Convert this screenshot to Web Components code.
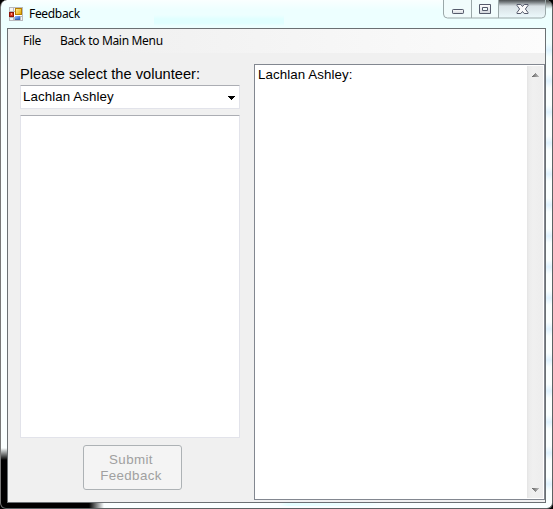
<!DOCTYPE html>
<html lang="en"><head><meta charset="utf-8"><title>Feedback</title>
<style>html,body{margin:0;width:553px;height:509px;overflow:hidden;background:#000}</style></head>
<body>
<feedback-window></feedback-window>
<script>
const define=(name,html)=>{
  const t=document.createElement('template');t.innerHTML=html;
  customElements.define(name,class extends HTMLElement{
    constructor(){super();this.attachShadow({mode:'open'}).append(t.content.cloneNode(true));}
  });
};
define('app-icon',`<style>:host{display:block;width:14px;height:14px}svg{display:block}</style>
<svg width="14" height="14" viewBox="0 0 14 14" shape-rendering="crispEdges">
<defs><linearGradient id="y" x2="1" y2="1"><stop stop-color="#ffeb91"/><stop offset="1" stop-color="#e6a600"/></linearGradient><linearGradient id="b" x2="1" y2="1"><stop stop-color="#98bdff"/><stop offset="1" stop-color="#2860c8"/></linearGradient></defs>
<path fill="#b9b9bd" d="M0 0h14v14H0z"/><path fill="#f4f4f4" d="M1 1h3v3H1zM5 1h1v3H5zM1 11h3v2H1zM12 10h1v3h-1z"/>
<path fill="#8d1409" d="M0 5h5v5H0z"/><path fill="#d83b22" d="M1 6h3v3H1z"/><path fill="#ff9a83" d="M2 6h1v2H2z"/>
<path fill="#fff" d="M5 5h1v5H5z"/><path fill="#b68000" d="M6 1h7v7H6z"/><path fill="url(#y)" d="M7 2h5v5H7z"/>
<path fill="#fff" d="M5 8h8v1H5z"/><path fill="#3864ad" d="M6 9h5v4H6z"/><path fill="url(#b)" d="M6 9h5v3H6z"/></svg>`);
define('caption-buttons',`<style>:host{display:block;width:103px;height:19px}svg{display:block}</style>
<svg width="103" height="19" viewBox="0 0 103 19">
<defs><linearGradient id="g" x2="0" y2="1"><stop stop-color="#fff"/><stop offset="1" stop-color="#d2d6dc"/></linearGradient>
<linearGradient id="c" x2="0" y2="1"><stop stop-color="#4d5052"/><stop offset=".12" stop-color="#777d80"/><stop offset=".34" stop-color="#d8e0e4"/><stop offset="1" stop-color="#edfafd"/></linearGradient></defs>
<path d="M.5 0v14q0 4 4 4H55V0z" fill="#f1fcfc"/><path d="M55 0v18h43q4 0 4-4V0z" fill="url(#c)"/>
<path d="M.5 0v14q0 4 4 4h94q4 0 4-4V0M28.500 0v18M55.500 0v18" fill="none" stroke="#9ba8a9"/>
<g stroke="#555a6b" fill="url(#g)"><rect x="9.500" y="9.500" width="11" height="4" rx=".7"/>
<path fill-rule="evenodd" d="M36.500 4.500h11v9h-11zM39.500 7.500h5v3h-5z"/>
<path stroke-linejoin="round" fill="#fafafa" d="M74 4.500h3.800l1.700 2 1.700-2H85v1l-2.600 3.500L85 12.500v1h-3.800l-1.700-2-1.700 2H74v-1L76.600 9 74 5.500z"/></g></svg>`);
define('title-bar',`<style>:host{display:flex;height:28px;box-sizing:border-box;padding-left:8px}
app-icon{margin-top:7px}.t{margin-left:6px;font:12px/16px "Noto Sans",sans-serif;letter-spacing:-.32px;padding-top:6px;flex:1;color:#000}
caption-buttons{margin-right:6px}</style><app-icon></app-icon><div class="t"><slot></slot></div><caption-buttons></caption-buttons>`);
define('menu-strip',`<style>:host{display:flex;height:24px;gap:19px;padding-left:15px;box-sizing:border-box;background:linear-gradient(90deg,#f0f0f0,#f0f0f0 20%,#fcfcfc);font:12px/24px "Noto Sans",sans-serif;letter-spacing:-.32px;color:#000}</style><slot></slot>`);
define('combo-box',`<style>:host{display:flex;align-items:center;justify-content:space-between;height:24px;box-sizing:border-box;border:1px solid #e2e3ea;border-top-color:#abadb3;border-radius:1px;background:#fff;padding:0 4px 0 2px;font-size:13.333px;line-height:16px;letter-spacing:.07px}svg{display:block;margin-top:2px}</style>
<span><slot></slot></span><svg width="7" height="4" shape-rendering="crispEdges"><path d="M0 0h7v1H0zM1 1h5v1H1zM2 2h3v1H2zM3 3h1v1H3z"/></svg>`);
define('text-area',`<style>:host{display:block;box-sizing:border-box;height:323px;border:1px solid #e2e3ea;border-top-color:#abadb3;border-radius:1px;background:#fff}</style><slot></slot>`);
define('submit-button',`<style>:host{display:block;box-sizing:border-box;width:99px;height:45px;border:1px solid #adb2b5;border-radius:3px;background:#f4f4f4;color:#a0a0a0;font-size:13.333px;line-height:16px;text-align:center;padding:6px 3px 0 0;letter-spacing:.4px}</style><slot></slot>`);
define('scroll-bar',`<style>:host{display:flex;flex-direction:column;justify-content:space-between;align-items:center;box-sizing:border-box;width:17px;padding:7px 0 6px 1px;background:linear-gradient(90deg,#fff 1px,#e4e4e4 1px,#ececec 3px,#f0f0f0 7px,#ededed)}svg{display:block}</style>
<svg width="8" height="4" shape-rendering="crispEdges"><defs><linearGradient id="s"><stop stop-color="#666"/><stop offset="1" stop-color="#bbb"/></linearGradient></defs><path fill="url(#s)" d="M4 0h1v1h1v1h1v1h1v1H1V3h1V2h1V1h1z"/></svg>
<svg width="8" height="4" shape-rendering="crispEdges"><defs><linearGradient id="s"><stop stop-color="#666"/><stop offset="1" stop-color="#bbb"/></linearGradient></defs><path fill="url(#s)" d="M1 0h7v1H7v1H6v1H5v1H4V3H3V2H2V1H1z"/></svg>`);
define('history-box',`<style>:host{display:flex;box-sizing:border-box;border:1px solid #828790;background:#fff;padding:1px;font-size:13.333px;line-height:16px;letter-spacing:.07px}.t{flex:1;padding:1px 0 0 2px}</style><div class="t"><slot></slot></div><scroll-bar></scroll-bar>`);
define('feedback-form',`<style>:host{display:grid;grid-template-columns:220px 291px;column-gap:14px;padding:11px 0 0 12px;height:449px;box-sizing:border-box;color:#000;font-family:"Liberation Sans",Arial,sans-serif}
.l{display:flex;flex-direction:column}.label{font-size:14.667px;line-height:18px;height:20px;padding-top:1px;white-space:nowrap}
text-area{margin-top:6px}submit-button{margin:7px 0 0 63px}history-box{height:436px}</style>
<div class="l"><div class="label">Please select the volunteer:</div><combo-box>Lachlan Ashley</combo-box><text-area></text-area><submit-button>Submit<br>Feedback</submit-button></div>
<history-box>Lachlan Ashley:</history-box>`);
define('feedback-window',`<style>:host{display:block;box-sizing:border-box;width:553px;height:509px;border:1px solid #5c6263;border-left-color:#777;border-top:0;border-radius:7px 7px 6px 6px;overflow:hidden;
background:
linear-gradient(#000c,#0006 4px,#0000 9px) 500px 0/52px 9px no-repeat,
linear-gradient(90deg,#000 0 88px,#0000 103px) 0 503px/110px 6px no-repeat,
linear-gradient(#0000,#000 12px) 0 448px/7px 70px no-repeat,
linear-gradient(90deg,#0000,#d0ffff88 10px,#d0ffff44 90px,#0000) 277px 502px/105px 4px no-repeat,
repeating-linear-gradient(#fff0 0 15px,#d0ebff99 22px,#fff0 29px 31px) 545px 28px/7px 481px no-repeat,
linear-gradient(#e0ffff00,#e0ffff 4px 8px,#e0ffff00) 153px 15px/130px 11px no-repeat,
linear-gradient(#faffff,#edffff 10px,#edffff 28px,#faffff 70px)}
.client{margin:0 6px;border:1px solid #6b7073;background:#f0f0f0;height:473px;width:537px}</style>
<title-bar>Feedback</title-bar><div class="client"><menu-strip><span>File</span><span>Back to Main Menu</span></menu-strip><feedback-form></feedback-form></div>`);
</script></body></html>
